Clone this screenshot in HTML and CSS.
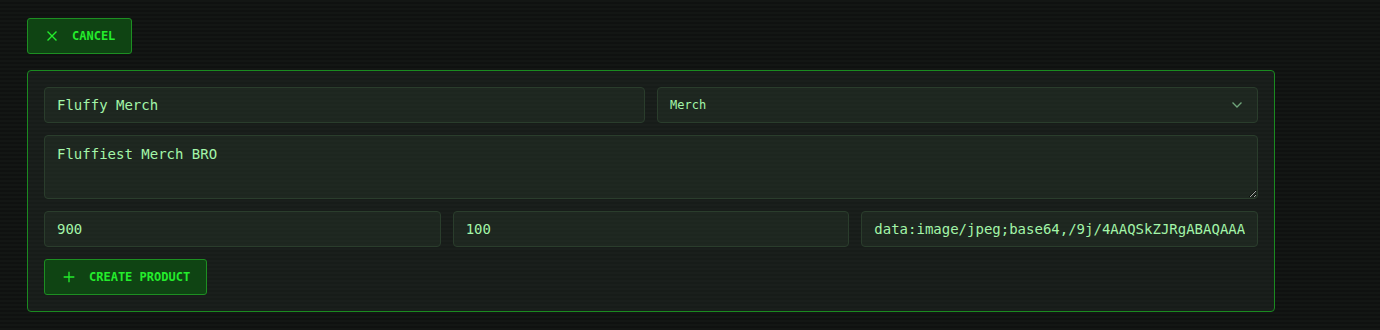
FILE: index.html
```html
<!DOCTYPE html>
<html lang="en">
<head>
<meta charset="utf-8">
<title>Create Product</title>
<link rel="stylesheet" href="styles.css">
</head>
<body>
<main class="page">
  <button class="btn btn-cancel" type="button">
    <svg class="icon" viewBox="0 0 24 24" width="16" height="16" fill="none" stroke="currentColor" stroke-width="2" stroke-linecap="square"><path d="M18 6 6 18M6 6l12 12"/></svg>
    <span>Cancel</span>
  </button>
  <form class="panel">
    <div class="row row-2">
      <input class="field" type="text" value="Fluffy Merch">
      <div class="select">
        <span class="select-value">Merch</span>
        <svg class="chev" viewBox="0 0 24 24" width="16" height="16" fill="none" stroke="currentColor" stroke-width="2" stroke-linecap="square"><path d="m6 9 6 6 6-6"/></svg>
      </div>
    </div>
    <textarea class="field area">Fluffiest Merch BRO</textarea>
    <div class="row row-3">
      <input class="field" type="text" value="900">
      <input class="field" type="text" value="100">
      <input class="field" type="text" value="data:image/jpeg;base64,/9j/4AAQSkZJRgABAQAAA">
    </div>
    <div class="actions">
      <button class="btn btn-create" type="button">
        <svg class="icon" viewBox="0 0 24 24" width="16" height="16" fill="none" stroke="currentColor" stroke-width="2" stroke-linecap="square"><path d="M5 12h14M12 5v14"/></svg>
        <span>Create Product</span>
      </button>
    </div>
  </form>
</main>
</body>
</html>
```

FILE: styles.css
```css
html, body {
  margin: 0;
  padding: 0;
}
body {
  background-color: #131614;
  background-image: repeating-linear-gradient(to bottom, rgba(0,0,0,0) 0, rgba(0,0,0,0) 2px, rgba(0,0,0,0.22) 2px, rgba(0,0,0,0.22) 4px);
  min-height: 330px;
  font-family: "DejaVu Sans Mono", "Liberation Mono", monospace;
  color: #a3f5a8;
}
.page {
  padding: 18px 105px 0 27px;
  display: flex;
  flex-direction: column;
  align-items: flex-start;
  gap: 16px;
}
.btn {
  display: inline-flex;
  align-items: center;
  gap: 12px;
  height: 36px;
  box-sizing: border-box;
  padding: 0 16px;
  border: 1px solid #1d8f22;
  border-radius: 3px;
  background: #0f4413;
  color: #24ec2c;
  font-family: "DejaVu Sans Mono", "Liberation Mono", monospace;
  font-weight: bold;
  font-size: 12px;
  text-transform: uppercase;
  white-space: nowrap;
  cursor: pointer;
}
.btn .icon {
  flex: none;
  display: block;
}
.panel {
  align-self: stretch;
  box-sizing: border-box;
  border: 1px solid #1a8a20;
  border-radius: 4px;
  padding: 16px;
  background: rgba(40, 48, 42, 0.35);
  display: flex;
  flex-direction: column;
  gap: 12px;
}
.row {
  display: grid;
  gap: 12px;
}
.row-2 { grid-template-columns: 1fr 1fr; }
.row-3 { grid-template-columns: 1fr 1fr 1fr; }
.field {
  display: block;
  box-sizing: border-box;
  width: 100%;
  height: 36px;
  margin: 0;
  padding: 0 12px;
  border: 1px solid #2a3d2c;
  border-radius: 4px;
  background: rgba(38, 52, 40, 0.45);
  color: #a3f5a8;
  font-family: "DejaVu Sans Mono", "Liberation Mono", monospace;
  font-size: 14px;
  outline: none;
}
.area {
  height: 64px;
  padding: 8px 12px;
  line-height: 20px;
  resize: vertical;
}
.select {
  display: flex;
  align-items: center;
  justify-content: space-between;
  box-sizing: border-box;
  height: 36px;
  padding: 0 12px;
  border: 1px solid #2a3d2c;
  border-radius: 4px;
  background: rgba(38, 52, 40, 0.45);
  font-size: 12px;
  color: #a3f5a8;
}
.chev {
  color: #6fa57a;
  display: block;
}
.actions {
  display: flex;
}
```
